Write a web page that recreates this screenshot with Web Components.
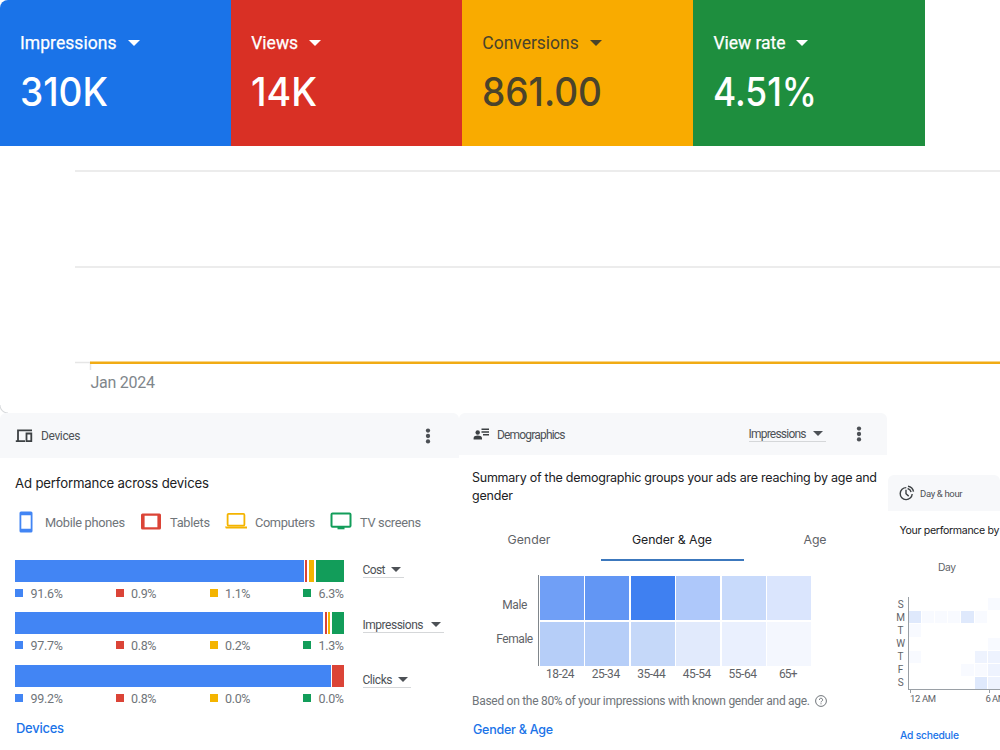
<!DOCTYPE html>
<html lang="en">
<head>
<meta charset="utf-8">
<title>Campaign overview</title>
<style>
  body {
    margin: 0;
    width: 1000px;
    height: 750px;
    overflow: hidden;
    background: #fff;
    font-family: Roboto, sans-serif;
    color: #5f6368;
  }
</style>
</head>
<body>
<ads-dashboard></ads-dashboard>

<script>
(function () {
  const BLUE = "#4285f4";
  const RED = "#db4437";
  const YELLOW = "#f4b400";
  const GREEN = "#129d5a";

  const ICONS = {
    devices: `<svg width="18" height="14" viewBox="0 0 18 14" fill="none" stroke="#3c4043" stroke-width="1.8"><path d="M17 1.3H3v10.500M.8 12.200h9.200M11.500 4.500h4.800v7.700h-4.800z"/></svg>`,
    people: `<svg width="17" height="12" viewBox="0 0 17 12" fill="#3c4043"><circle cx="4.7" cy="4.5" r="2.2"/><path d="M.6 11.5V10c0-1.600 2.500-2.400 4.100-2.400s4.300.8 4.300 2.400v1.500zM8.500.4H16V2H8.500zM8.500 3.200H16v1.600H8.500zM10 6h6v1.600h-6z"/></svg>`,
    clock: `<svg width="16" height="16" viewBox="0 0 16 16" fill="none" stroke="#3c4043" stroke-width="1.400"><path d="M7.300 2.600a6 6 0 1 0 5.900 6.400M7 4.800v4l2.700 2.300M9 1.200a6.600 6.600 0 0 1 5.500 5.500M8.600 3.500a4.800 4.800 0 0 1 3.500 3.500"/></svg>`,
    phone: `<svg width="22" height="22" viewBox="0 0 22 22"><path fill="${BLUE}" fill-rule="evenodd" d="M6 .5h10a1.500 1.500 0 0 1 1.500 1.500v18a1.500 1.500 0 0 1-1.500 1.500H6A1.500 1.500 0 0 1 4.500 20V2A1.500 1.500 0 0 1 6 .5zM6.300 4.200v13.600h9.400V4.200z"/></svg>`,
    tablet: `<svg width="22" height="22" viewBox="0 0 22 22"><path fill="${RED}" fill-rule="evenodd" d="M2.500 2.500h17A1.500 1.500 0 0 1 21 4v13a1.500 1.500 0 0 1-1.500 1.500h-17A1.500 1.500 0 0 1 1 17V4A1.500 1.500 0 0 1 2.500 2.500zM4.600 4.700v11.600h12.800V4.700z"/></svg>`,
    laptop: `<svg width="22" height="22" viewBox="0 0 22 22"><rect x="2.600" y="2.900" width="16.800" height="11.700" rx="1" fill="none" stroke="${YELLOW}" stroke-width="1.800"/><path fill="${YELLOW}" d="M0 15.500h22v2.100H.8z"/></svg>`,
    tv: `<svg width="22" height="22" viewBox="0 0 22 22"><rect x="1.500" y="2.600" width="19" height="13.200" rx="1" fill="none" stroke="${GREEN}" stroke-width="2"/><path fill="${GREEN}" d="M7.500 16h7v2.300h-7z"/></svg>`,
    help: `<svg width="12" height="12" viewBox="0 0 12 12" fill="none" stroke="#70757a"><circle cx="6" cy="6" r="5.400"/><path d="M4.400 4.900a1.600 1.600 0 1 1 2.400 1.300c-.5.300-.8.500-.8 1.200M6 8.300v1"/></svg>`,
    more: `<svg width="6" height="16" viewBox="0 0 6 16" fill="#4c5055"><circle cx="3" cy="2.600" r="2.150"/><circle cx="3" cy="8" r="2.150"/><circle cx="3" cy="13.400" r="2.150"/></svg>`,
  };

  class BaseElement extends HTMLElement {
    connectedCallback() {
      if (!this.shadowRoot) {
        this.attachShadow({ mode: "open" });
      }
      this.render();
    }
    attr(name, fallback = "") {
      return this.hasAttribute(name) ? this.getAttribute(name) : fallback;
    }
  }

  // Spreads its text over the measure given in "width", by tracking
  // or, with the "condense" attribute, by scaling the glyphs
  class FitText extends BaseElement {
    render() {
      const width = Number(this.attr("width", 0));
      this.shadowRoot.innerHTML = `
      <style>
        :host { display: block; flex: none; white-space: nowrap; width: ${width}px; }
        span { display: inline-block; transform-origin: 0 50%; }
      </style>
      <span><slot></slot></span>`;
      const span = this.shadowRoot.querySelector("span");
      const count = this.textContent.length;
      const natural = span.getBoundingClientRect().width;
      if (!width || count < 2) {
        return;
      }
      if (this.hasAttribute("condense")) {
        span.style.transform = `scaleX(${width / natural})`;
      } else {
        span.style.letterSpacing = `${(width - natural) / (count - 1)}px`;
      }
    }
  }

  class UiIcon extends BaseElement {
    render() {
      this.shadowRoot.innerHTML = `
      <style>
        :host { display: block; flex: none; }
        svg { display: block; }
      </style>
      ${ICONS[this.attr("name")]}`;
    }
  }

  class ScoreTile extends BaseElement {
    render() {
      this.shadowRoot.innerHTML = `
      <style>
        :host {
          display: block;
          box-sizing: border-box;
          width: 231.15px;
          height: 146px;
          padding: 31px 0 0 20px;
          color: ${this.attr("ink", "#fff")};
          background: ${this.attr("fill")};
        }
        .label { display: flex; align-items: center; font: 17.500px/24px Roboto, sans-serif; -webkit-text-stroke: ${this.hasAttribute("ink") ? 0 : 0.25}px; }
        i { margin-left: 11px; border: 6.500px solid transparent; border-top-color: currentColor; border-bottom: 0; }
        .value { margin-top: 14px; font: 450 39.500px/46px Inter, sans-serif; }
      </style>
      <div class="label"><fit-text width="${this.attr("label-width")}">${this.attr("label")}</fit-text><i></i></div>
      <div class="value"><fit-text condense width="${this.attr("value-width")}">${this.attr("value")}</fit-text></div>`;
    }
  }

  class TrendChart extends BaseElement {
    render() {
      this.shadowRoot.innerHTML = `
      <style>
        :host {
          display: block;
          height: 267px;
          background: radial-gradient(circle at 100% 0, transparent 7px, #d5d7da 8px, transparent 9px) 0 100% / 8px 8px no-repeat;
        }
        svg { display: block; }
        .month { padding-left: 90.500px; font-size: 16px; line-height: 22px; color: #80868b; }
      </style>
      <svg width="1000" height="226" viewBox="0 0 1000 226">
        <path stroke="#ececec" stroke-width="2" d="M75 25h925M75 121h925"/>
        <path stroke="#e6e6e6" stroke-width="1.500" d="M75 216.500h16M90.500 216v8"/>
        <path stroke="#f1ab14" stroke-width="2.600" d="M90 216.700h910"/>
      </svg>
      <div class="month"><fit-text width="64.500">Jan 2024</fit-text></div>`;
    }
  }

  class DropLabel extends BaseElement {
    render() {
      this.shadowRoot.innerHTML = `
      <style>
        :host {
          display: inline-flex;
          align-items: center;
          height: 14px;
          padding-right: 3px;
          border-bottom: 1px solid #d5d7d9;
          font-size: 12px;
          line-height: 14px;
          color: #4d5156;
        }
        i { margin-left: ${this.attr("gap", 6)}px; border: 5px solid transparent; border-top-color: #4d5156; border-bottom: 0; }
      </style>
      <fit-text width="${this.attr("width")}">${this.attr("label")}</fit-text><i></i>`;
    }
  }

  class PanelCard extends BaseElement {
    render() {
      this.shadowRoot.innerHTML = `
      <style>
        :host { display: block; flex: none; }
        header {
          display: flex;
          align-items: center;
          box-sizing: border-box;
          height: var(--bar-height);
          padding: 0 var(--bar-right, 28px) 0 var(--bar-left, 15px);
          background: #f7f8fa;
          border-radius: 6px 6px 0 0;
          font-size: var(--bar-font, 12px);
          color: #4d5156;
        }
        fit-text { margin-left: var(--bar-gap, 8px); padding-top: 1px; }
        .tools { display: flex; align-items: center; margin-left: auto; }
      </style>
      <header>
        <ui-icon name="${this.attr("icon")}"></ui-icon>
        <fit-text width="${this.attr("heading-width")}">${this.attr("heading")}</fit-text>
        <div class="tools"><slot name="tools"></slot></div>
      </header>
      <slot></slot>`;
    }
  }

  class LegendItem extends BaseElement {
    render() {
      this.shadowRoot.innerHTML = `
      <style>
        :host { display: flex; align-items: center; gap: 8px; font-size: 12.800px; line-height: 22px; color: #70757a; }
        fit-text { padding-top: 2px; }
      </style>
      <ui-icon name="${this.attr("icon")}"></ui-icon>
      <fit-text width="${this.attr("width")}">${this.attr("label")}</fit-text>`;
    }
  }

  class ShareBar extends BaseElement {
    render() {
      const colors = [BLUE, RED, YELLOW, GREEN];
      const parts = this.attr("parts").split(" ");
      const values = this.attr("values").split(" ");
      this.shadowRoot.innerHTML = `
      <style>
        :host { display: block; width: 329px; height: 52.600px; }
        .bar { display: flex; gap: 1.300px; height: 22px; }
        .values { display: grid; grid-template-columns: 100.500px 94px 93.500px 41px; margin-top: 3px; }
        .values div { display: flex; align-items: center; gap: 7.500px; font-size: 12.500px; line-height: 18px; color: #70757a; }
        .values i { width: 8px; height: 8px; margin-top: -2px; }
      </style>
      <div class="bar">${parts
        .map((w, i) => (w > 0 ? `<div style="width:${w}px;background:${colors[i]}"></div>` : ""))
        .join("")}</div>
      <div class="values">${values
        .map((v, i) => `<div><i style="background:${colors[i]}"></i><fit-text width="${i ? 25.5 : 32.5}">${v}</fit-text></div>`)
        .join("")}</div>`;
    }
  }

  class DevicesPanel extends BaseElement {
    render() {
      this.shadowRoot.innerHTML = `
      <style>
        :host { display: block; padding: 0 0 0 15px; }
        h2 { margin: 15px 0 0; font: 400 13.200px/20px Inter, sans-serif; color: #202124; }
        .legend { display: flex; gap: 15px; height: 22px; margin-top: 18px; }
        .stats { display: flex; margin-top: 26.500px; }
        .picks { display: flex; flex-direction: column; align-items: flex-start; margin-left: 18.500px; padding-top: 3px; }
        .picks drop-label + drop-label { margin-top: 40px; }
        .link { margin: 1px 0 0 1px; font: 500 13px/20px Inter, sans-serif; color: #1a73e8; }
      </style>
      <h2><fit-text width="194">Ad performance across devices</fit-text></h2>
      <div class="legend">
        <legend-item icon="phone" label="Mobile phones" width="80"></legend-item>
        <legend-item icon="tablet" label="Tablets" width="40"></legend-item>
        <legend-item icon="laptop" label="Computers" width="60"></legend-item>
        <legend-item icon="tv" label="TV screens" width="61"></legend-item>
      </div>
      <div class="stats">
        <div>
          <share-bar parts="289 2.200 5.500 28.500" values="91.6% 0.9% 1.1% 6.3%"></share-bar>
          <share-bar parts="308.500 2.200 2 12.500" values="97.7% 0.8% 0.2% 1.3%"></share-bar>
          <share-bar parts="315.500 12 0 0" values="99.2% 0.8% 0.0% 0.0%"></share-bar>
        </div>
        <div class="picks">
          <drop-label label="Cost" width="23" gap="5"></drop-label>
          <drop-label label="Impressions" width="61" gap="7.500"></drop-label>
          <drop-label label="Clicks" width="30" gap="5.500"></drop-label>
        </div>
      </div>
      <div class="link"><fit-text width="48">Devices</fit-text></div>`;
    }
  }

  class AgeGrid extends BaseElement {
    render() {
      const male = ["#709ff6", "#6296f4", "#3f80f1", "#aec8fa", "#c8dafb", "#dae5fd"];
      const female = ["#b6cef8", "#b6cef8", "#c5d8f9", "#e1eafc", "#eaf0fe", "#f4f7fe"];
      const ages = ["18-24", "25-34", "35-44", "45-54", "55-64", "65+"];
      this.shadowRoot.innerHTML = `
      <style>
        :host { display: flex; font-size: 12px; line-height: 14px; color: #5f6368; }
        .sexes { display: flex; flex-direction: column; align-items: center; gap: 20px; width: 37.500px; padding: 23px 4px 0 24.500px; }
        .cells {
          display: grid;
          grid-template-columns: repeat(6, 44px);
          grid-template-rows: 44.200px 44.200px;
          gap: 1.600px;
          padding: 1px 0 0 1px;
          border-left: 1px solid #80868b;
        }
        .ages { display: grid; grid-template-columns: repeat(6, 45.600px); margin-top: 1px; justify-items: center; }
      </style>
      <div class="sexes"><fit-text width="25">Male</fit-text><fit-text width="37">Female</fit-text></div>
      <div>
        <div class="cells">${male
          .concat(female)
          .map((c) => `<div style="background:${c}"></div>`)
          .join("")}</div>
        <div class="ages">${ages
          .map((a) => `<fit-text width="${a.length > 3 ? 28.5 : 18.5}">${a}</fit-text>`)
          .join("")}</div>
      </div>`;
    }
  }

  class DemographicsPanel extends BaseElement {
    render() {
      this.shadowRoot.innerHTML = `
      <style>
        :host { display: block; }
        h2 { margin: 14px 0 0 13px; font: 400 12.500px/18px Inter, sans-serif; color: #202124; }
        .tabs { display: grid; grid-template-columns: repeat(3, 143px); height: 41px; margin: 15px 0 0 -1.500px; font: 400 12.300px/40px Inter, sans-serif; color: #5f6368; }
        .tabs div { display: flex; justify-content: center; box-sizing: border-box; height: 41px; }
        .tabs .on { color: #202124; border-bottom: 2px solid #3c78bd; }
        age-grid { margin: 14px 0 0 12.500px; }
        .note { display: flex; align-items: center; gap: 5px; margin: 11.500px 0 0 13px; font-size: 12px; line-height: 18px; color: #70757a; }
        .link { margin: 10px 0 0 14px; font: 500 12.500px/20px Inter, sans-serif; color: #1a73e8; }
      </style>
      <h2><fit-text width="405">Summary of the demographic groups your ads are reaching by age and</fit-text><fit-text width="41">gender</fit-text></h2>
      <div class="tabs">
        <div><fit-text width="43">Gender</fit-text></div>
        <div class="on"><fit-text width="80">Gender &amp; Age</fit-text></div>
        <div><fit-text width="23">Age</fit-text></div>
      </div>
      <age-grid></age-grid>
      <div class="note"><fit-text width="338">Based on the 80% of your impressions with known gender and age.</fit-text><ui-icon name="help"></ui-icon></div>
      <div class="link"><fit-text width="80">Gender &amp; Age</fit-text></div>`;
    }
  }

  class DayGrid extends BaseElement {
    render() {
      const days = ["S", "M", "T", "W", "T", "F", "S"];
      // one digit per cell, 0 is empty
      const load = ["0000001", "3111310", "1000000", "0000001", "1000022", "0000112", "0000032"];
      const shades = ["#fff", "#f8faff", "#eef3fe", "#dfe9fc"];
      this.shadowRoot.innerHTML = `
      <style>
        :host { display: block; font-size: 10px; color: #5f6368; }
        .plot { display: flex; padding-left: 4.500px; }
        .days { display: grid; grid-template-rows: repeat(7, 13px); box-sizing: border-box; width: 17px; padding: 1px 0 0 1px; line-height: 14px; text-align: center; }
        .cells {
          display: grid;
          grid-template-columns: repeat(7, 12.200px);
          grid-template-rows: repeat(7, 12.200px);
          gap: 1px;
          padding-top: 1px;
          border-left: 1px solid #9aa0a6;
          border-bottom: 1px solid #9aa0a6;
        }
        .hours { display: flex; gap: 49.500px; padding-left: 22px; font-size: 9.500px; line-height: 12px; }
        .ticks { display: flex; gap: 78px; height: 3px; padding-left: 21.500px; }
        .ticks i { width: 1px; background: #9aa0a6; }
      </style>
      <div class="plot">
        <div class="days">${days.map((d) => `<span>${d}</span>`).join("")}</div>
        <div class="cells">${load
          .map((row) => [...row].map((n) => `<div style="background:${shades[n]}"></div>`).join(""))
          .join("")}</div>
      </div>
      <div class="ticks"><i></i><i></i></div>
      <div class="hours"><fit-text width="26">12 AM</fit-text><fit-text width="20.500">6 AM</fit-text></div>`;
    }
  }

  class SchedulePanel extends BaseElement {
    render() {
      this.shadowRoot.innerHTML = `
      <style>
        :host { display: block; }
        h2 { margin: 11px 0 0 11.500px; font: 400 10.600px/17px Inter, sans-serif; color: #202124; }
        .tab { margin: 20px 0 0 50px; font: 400 10.300px/17px Inter, sans-serif; color: #5f6368; }
        day-grid { margin-top: 21px; }
        .link { margin: 22px 0 0 12px; font: 500 10.300px/16px Inter, sans-serif; color: #1a73e8; }
      </style>
      <h2><fit-text width="100">Your performance by</fit-text></h2>
      <div class="tab"><fit-text width="18">Day</fit-text></div>
      <day-grid></day-grid>
      <div class="link"><fit-text width="59">Ad schedule</fit-text></div>`;
    }
  }

  class AdsDashboard extends BaseElement {
    render() {
      this.shadowRoot.innerHTML = `
      <style>
        :host { display: block; width: 1000px; height: 750px; overflow: hidden; }
        .scores { display: flex; }
        score-tile:first-child { border-top-left-radius: 8px; }
        .panels { display: flex; align-items: flex-start; }
        .devices { width: 459px; --bar-height: 45px; --bar-right: 28px; }
        .demographics { width: 428px; --bar-height: 42px; --bar-left: 14px; --bar-right: 25px; --bar-gap: 7px; }
        .demographics drop-label { margin-right: 30px; }
        .schedule { width: 112px; margin: 62px 0 0 1px; --bar-height: 36px; --bar-left: 11px; --bar-right: 0; --bar-gap: 5px; --bar-font: 9.500px; }
      </style>
      <div class="scores">
        <score-tile label="Impressions" label-width="96.500" value="310K" value-width="88" fill="#1a73e8"></score-tile>
        <score-tile label="Views" label-width="47" value="14K" value-width="66" fill="#d93025"></score-tile>
        <score-tile label="Conversions" label-width="96.500" value="861.00" value-width="120" fill="#f9ab00" ink="#4a432b"></score-tile>
        <score-tile label="View rate" label-width="72" value="4.51%" value-width="104" fill="#1e8e3e"></score-tile>
      </div>
      <trend-chart></trend-chart>
      <div class="panels">
        <panel-card class="devices" icon="devices" heading="Devices" heading-width="39.500">
          <ui-icon slot="tools" name="more"></ui-icon>
          <devices-panel></devices-panel>
        </panel-card>
        <panel-card class="demographics" icon="people" heading="Demographics" heading-width="68.500">
          <drop-label slot="tools" label="Impressions" width="58" gap="6.500"></drop-label>
          <ui-icon slot="tools" name="more"></ui-icon>
          <demographics-panel></demographics-panel>
        </panel-card>
        <panel-card class="schedule" icon="clock" heading="Day &amp; hour" heading-width="42.500">
          <schedule-panel></schedule-panel>
        </panel-card>
      </div>`;
    }
  }

  window.customElements.define("ads-dashboard", AdsDashboard);
  window.customElements.define("score-tile", ScoreTile);
  window.customElements.define("trend-chart", TrendChart);
  window.customElements.define("panel-card", PanelCard);
  window.customElements.define("devices-panel", DevicesPanel);
  window.customElements.define("demographics-panel", DemographicsPanel);
  window.customElements.define("schedule-panel", SchedulePanel);
  window.customElements.define("legend-item", LegendItem);
  window.customElements.define("share-bar", ShareBar);
  window.customElements.define("drop-label", DropLabel);
  window.customElements.define("age-grid", AgeGrid);
  window.customElements.define("day-grid", DayGrid);
  window.customElements.define("ui-icon", UiIcon);
  // last, so that it measures text with the fonts of its hosts applied
  window.customElements.define("fit-text", FitText);
})();
</script>
</body>
</html>
